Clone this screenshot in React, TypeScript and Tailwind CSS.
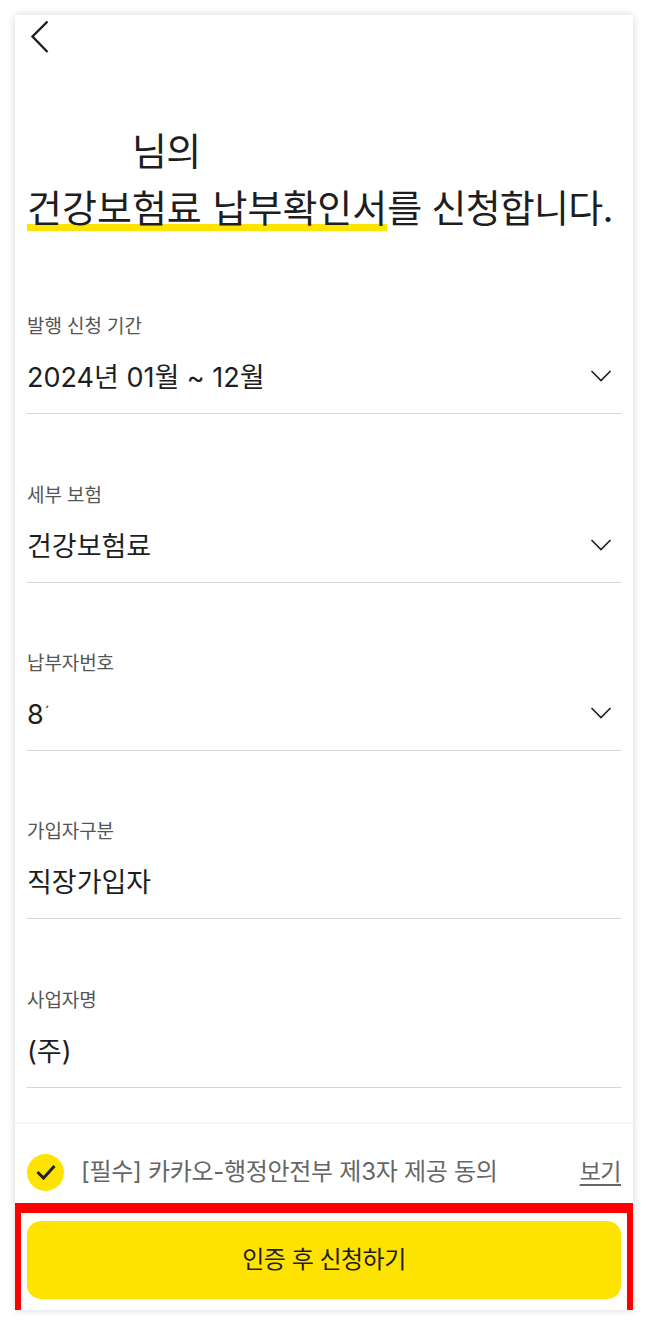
import type { ReactNode } from "react";

const font = "font-['Inter','Noto_Sans_CJK_KR',sans-serif]";

function Chevron() {
  return (
    <svg width="22" height="14" viewBox="0 0 22 14" fill="none" stroke="#1e1e1e" strokeWidth="1.6" className="mb-[5px] mr-[9px] shrink-0">
      <path d="M1.5 2 L11 11.5 L20.5 2" />
    </svg>
  );
}

function Field({ label, value, select, h }: { label: string; value: ReactNode; select?: boolean; h: string }) {
  return (
    <div className={`flex flex-col ${h}`}>
      <div className="h-[24px] text-[19px] leading-[24px] tracking-[-0.1px] text-[#555555]">{label}</div>
      <div className="mt-[19px] flex h-[40px] items-center justify-between text-[27px] leading-[40px] text-[#1e1e1e]">
        <span>{value}</span>
        {select && <Chevron />}
      </div>
      <div className="mt-[15px] h-px bg-[#d6d6d6]" />
    </div>
  );
}

export default function App() {
  return (
    <div className={`h-[1325px] w-[648px] bg-white pt-[15px] pl-[15px] ${font}`}>
      <div className="flex h-[1295px] w-[618px] flex-col bg-white shadow-[0_0_8px_rgba(0,0,0,0.16)]">
        <div className="flex-1 px-[12px]">
          <svg width="22" height="34" viewBox="0 0 22 34" fill="none" stroke="#1e1e1e" strokeWidth="2.4" className="ml-[2px] mt-[4px]">
            <path d="M18.5 2.5 L3.5 17.5 L18.5 33" />
          </svg>
          <h1 className="mt-[70px] text-[38px] font-normal leading-[57px] tracking-[-0.75px] text-[#1e1e1e]">
            <div className="pl-[105px]">님의</div>
            <div className="whitespace-nowrap">
              <span className="tracking-[0px] bg-[linear-gradient(transparent_39px,#ffe300_39px,#ffe300_46px,transparent_46px)]">건강보험료 납부확인서</span>를 신청합니다.
            </div>
          </h1>
          <div className="mt-[78px] flex flex-col">
            <Field label="발행 신청 기간" value="2024년 01월 ~ 12월" select h="h-[169px]" />
            <Field label="세부 보험" value="건강보험료" select h="h-[168px]" />
            <Field
              label="납부자번호"
              value={
                <>
                  8<span className="ml-[1px] align-[7px] text-[15px] leading-none">´</span>
                </>
              }
              select
              h="h-[168px]"
            />
            <Field label="가입자구분" value="직장가입자" h="h-[169px]" />
            <Field label="사업자명" value="(주)" h="h-[119px]" />
          </div>
        </div>
        <div className="flex h-[81px] items-center justify-between border-t-2 border-[#f5f5f5] px-[12px] pt-[17px]">
          <div className="flex items-center">
            <div className="flex h-[37px] w-[37px] items-center justify-center rounded-full bg-[#ffe300]">
              <svg width="22" height="18" viewBox="0 0 22 18" fill="none" stroke="#222222" strokeWidth="3">
                <path d="M2.5 9 L8.5 15 L19.5 3" />
              </svg>
            </div>
            <span className="ml-[17px] text-[24px] tracking-[-0.3px] text-[#666666]">[필수] 카카오-행정안전부 제3자 제공 동의</span>
          </div>
          <span className="text-[23px] tracking-[-0.5px] text-[#666666] underline underline-offset-4">보기</span>
        </div>
        <div className="h-[107px] border-x-[6px] border-t-[10px] border-[#ff0000] bg-white px-[6px] pt-[8px]">
          <button className="flex h-[78px] w-full items-center justify-center rounded-[14px] bg-[#ffe300] text-[24px] tracking-[-0.5px] text-[#1e1e1e]">
            인증 후 신청하기
          </button>
        </div>
      </div>
    </div>
  );
}
